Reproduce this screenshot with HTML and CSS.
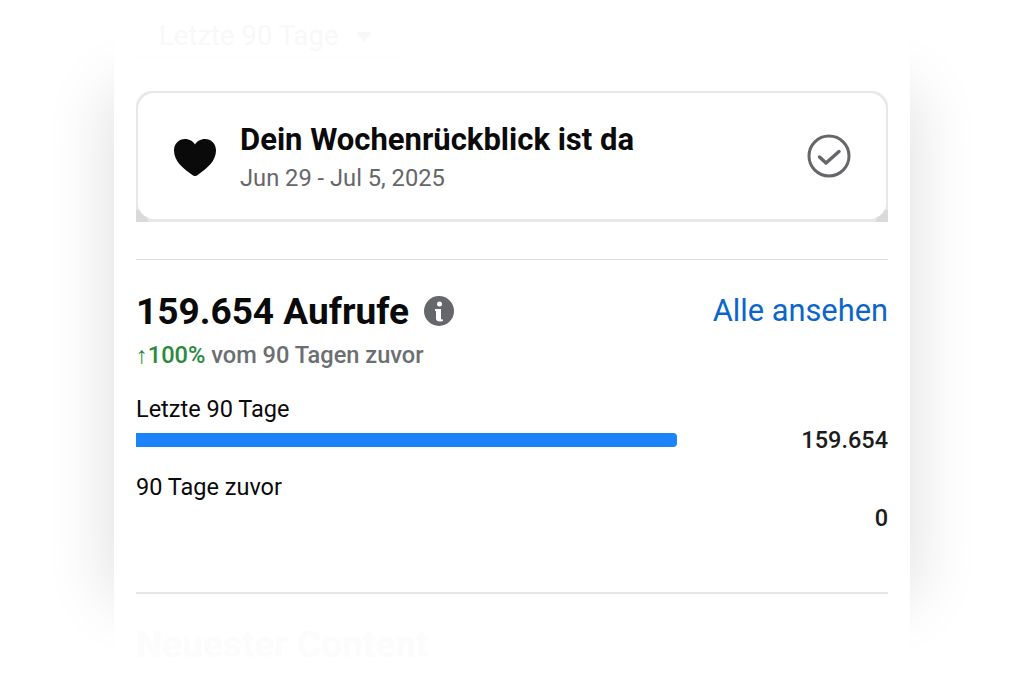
FILE: index.html
```html
<!DOCTYPE html>
<html lang="de">
<head>
    <meta charset="UTF-8">
    <meta name="viewport" content="width=device-width, initial-scale=1.0">
    <title>Wochenrückblick</title>
    <link rel="stylesheet" href="styles.css">
</head>
<body>

    <div class="panel">
        <div class="rangeFilter">
            <span>Letzte 90 Tage</span>
            <svg class="rangeCaret" width="16" height="10" viewBox="0 0 16 10"><path d="M0 0h16L8 10z" fill="#f8f8f8"/></svg>
        </div>

        <div class="recapFrame">
            <div class="recapCard">
                <svg class="heartIcon" width="44" height="38" viewBox="0 0 44 38">
                    <path d="M22 38c-1 0-2-.5-3-1.300C10 30.500 1 23 1 12.500 1 5.500 6 1 12 1c4.500 0 8 2.300 10 5.500C24 3.300 27.500 1 32 1c6 0 11 4.500 11 11.500 0 10.500-9 18-18 24.200-1 .8-2 1.300-3 1.300z" fill="#0a0a0a"/>
                </svg>
                <div class="recapText">
                    <div class="recapTitle">Dein Wochenrückblick ist da</div>
                    <div class="recapDate">Jun 29 - Jul 5, 2025</div>
                </div>
                <svg class="checkIcon" width="44" height="44" viewBox="0 0 44 44" fill="none" stroke="#65676b">
                    <circle cx="22" cy="22" r="20" stroke-width="3"/>
                    <path d="M12.500 23l6.500 6 13-11.500" stroke-width="3.500" stroke-linecap="round" stroke-linejoin="round"/>
                </svg>
            </div>
        </div>

        <div class="section viewsSection">
            <div class="viewsHeader">
                <h2 class="viewsTitle">159.654 Aufrufe</h2>
                <svg class="infoIcon" width="30" height="30" viewBox="0 0 30 30">
                    <circle cx="15" cy="15" r="15" fill="#65676b"/>
                    <circle cx="15.500" cy="8" r="2.500" fill="#fff"/>
                    <path d="M11 13h6v9c0 1 .5 1.500 2 1.500v1.500c-4 1.200-7 .5-7-2.500v-7.500h-1z" fill="#fff"/>
                </svg>
                <a class="seeAll">Alle ansehen</a>
            </div>
            <div class="viewsChange"><span class="changeUp"><span class="changeArrow">↑</span>100%</span> vom 90 Tagen zuvor</div>

            <div class="statRow">
                <div class="statLabel">Letzte 90 Tage</div>
                <div class="statLine">
                    <div class="statTrack"><div class="statBar" style="width: 541px"></div></div>
                    <div class="statValue">159.654</div>
                </div>
            </div>
            <div class="statRow">
                <div class="statLabel">90 Tage zuvor</div>
                <div class="statLine">
                    <div class="statTrack"></div>
                    <div class="statValue">0</div>
                </div>
            </div>
        </div>

        <div class="section contentSection">
            <h2 class="contentTitle">Neuester Content</h2>
        </div>
    </div>

</body>
</html>
```

FILE: styles.css
```css
body {
    font-family: 'Roboto', 'Liberation Sans', sans-serif;
    margin: 0;
    padding: 0;
    background-color: #fff;
    height: 683px;
    overflow: hidden;
}

.panel {
    position: relative;
    width: 796px;
    height: 683px;
    margin-left: 114px;
    padding: 0 22px 0 22px;
    box-sizing: border-box;
    background-color: #fff;
}

/* soft shadow, shorter than the panel so it fades out top and bottom */
.panel::before {
    content: '';
    position: absolute;
    z-index: -1;
    top: 95px;
    bottom: 90px;
    left: 0;
    right: 0;
    box-shadow: 0 0 60px 6px rgba(0, 0, 0, 0.12);
}

.rangeFilter {
    display: flex;
    align-items: center;
    gap: 17px;
    height: 58px;
    padding: 14px 0 0 23px;
    box-sizing: border-box;
    font-size: 27.500px;
    color: #f8f8f8;
    border-bottom: 1px solid #fcfcfc;
    width: 264px;
}

.rangeCaret {
    margin-top: 2px;
}

.recapFrame {
    margin-top: 33px;
    height: 131px;
    padding: 2px 2px 3px 2px;
    box-sizing: border-box;
    background:
        linear-gradient(#dadadc, #dadadc) left bottom / 12px 12px no-repeat,
        linear-gradient(#dadadc, #dadadc) right bottom / 12px 12px no-repeat,
        #e8e8ea;
    border-radius: 16px 16px 0 0;
}

.recapCard {
    display: flex;
    align-items: center;
    height: 100%;
    padding: 0 35px 0 35px;
    box-sizing: border-box;
    background-color: #fff;
    border-radius: 16px;
}

.heartIcon {
    flex-shrink: 0;
    margin-top: 2px;
}

.recapText {
    flex: 1;
    margin-left: 23px;
}

.recapTitle {
    font-size: 31px;
    font-weight: 700;
    line-height: 36px;
    margin-top: 2px;
    color: #0a0a0a;
}

.recapDate {
    font-size: 23.700px;
    line-height: 30px;
    margin-top: 5px;
    color: #65676b;
}

.checkIcon {
    flex-shrink: 0;
}

.section {
    border-top: 1px solid #dddfe2;
}

.viewsSection {
    margin-top: 37px;
    height: 333px;
    box-sizing: border-box;
    padding-top: 29px;
}

.viewsHeader {
    display: flex;
    align-items: center;
    height: 44px;
}

.viewsTitle {
    margin: 0;
    font-size: 37px;
    font-weight: 700;
    color: #0a0a0a;
}

.infoIcon {
    margin-left: 15px;
}

.seeAll {
    margin-left: auto;
    margin-bottom: 2px;
    font-size: 30.800px;
    color: #0a66c8;
}

.viewsChange {
    margin-top: 7px;
    font-size: 23.600px;
    font-weight: 500;
    line-height: 30px;
    color: #6c6e72;
}

.changeUp {
    color: #2a8a3e;
}

.changeArrow {
    font-weight: 400;
}

.statRow {
    margin-top: 24px;
}

.statRow + .statRow {
    margin-top: 19px;
}

.statLabel {
    font-size: 23.500px;
    line-height: 30px;
    color: #0a0a0a;
}

.statLine {
    display: flex;
    align-items: center;
    height: 26px;
    margin-top: 3px;
}

.statTrack {
    flex: 1;
    height: 14px;
}

.statBar {
    height: 14px;
    background-color: #1b82f7;
    border-radius: 0 4px 4px 0;
}

.statValue {
    font-size: 23.500px;
    font-weight: 500;
    color: #1c1c1c;
}

.contentSection {
    border-top: 2px solid #e6e6e8;
}

.contentTitle {
    margin: 29px 0 0 0;
    font-size: 37px;
    font-weight: 700;
    color: #fcfcfc;
}
```
